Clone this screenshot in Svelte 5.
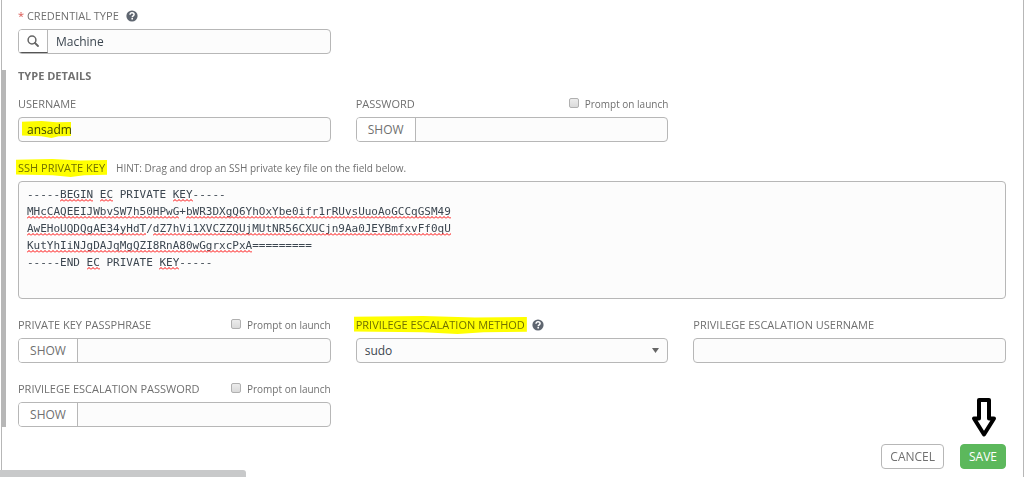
<script lang="ts">
	interface Mark {
		start: number;
		length: number;
	}

	let credentialType = $state('Machine');
	let username = $state('ansadm');
	let password = $state('');
	let passphrase = $state('');
	let method = $state('sudo');
	let escalationUser = $state('');
	let escalationPassword = $state('');

	let privateKey = $state(
		[
			'-----BEGIN EC PRIVATE KEY-----',
			'MHcCAQEEIJWbvSW7h50HPwG+bWR3DXgQ6YhOxYbe0ifr1rRUvsUuoAoGCCqGSM49',
			'AwEHoUQDQgAE34yHdT/dZ7hVi1XVCZZQUjMUtNR56CXUCjn9Aa0JEYBmfxvFf0qU',
			'KutYhIiNJgDAJqMgQZI8RnA80wGgrxcPxA=========',
			'-----END EC PRIVATE KEY-----'
		].join('\n')
	);

	const known = ['PRIVATE', 'END'];

	function findMarks(line: string): Mark[] {
		return [...line.matchAll(/[A-Za-z0-9]+/g)]
			.filter((m) => !known.includes(m[0]))
			.map((m) => ({ start: m.index, length: m[0].length }));
	}

	let markedLines = $derived(privateKey.split('\n').map(findMarks));
</script>

{#snippet help()}
	<svg class="help" viewBox="0 0 12 12" aria-hidden="true">
		<circle cx="6" cy="6" r="5.6" fill="#5f6670" />
		<path d="M4 4.8C4 3.4 4.9 2.8 6 2.8s2.1.7 2.1 1.8C8.1 5.9 6.2 5.9 6.2 7.2" fill="none" stroke="#fff" stroke-width="1.5" />
		<rect x="5.4" y="8" width="1.6" height="1.5" fill="#fff" />
	</svg>
{/snippet}

{#snippet prompt(id: string)}
	<label class="prompt" for={id}>
		<input {id} type="checkbox" />
		Prompt on launch
	</label>
{/snippet}

<form class="panel" onsubmit={(e) => e.preventDefault()}>
	<div class="grid">
		<div class="field">
			<div class="label-row">
				<label for="credential-type"><span class="required">*</span> CREDENTIAL TYPE</label>
				{@render help()}
			</div>
			<div class="group">
				<button type="button" class="lookup" aria-label="Search">
					<svg viewBox="0 0 12 12" aria-hidden="true">
						<circle cx="5" cy="5" r="3.9" fill="none" stroke="#666" stroke-width="1.5" />
						<path d="M8 8L11 11" stroke="#666" stroke-width="1.8" stroke-linecap="round" />
					</svg>
				</button>
				<input id="credential-type" type="text" bind:value={credentialType} />
			</div>
		</div>
	</div>

	<section class="details">
		<h2>TYPE DETAILS</h2>

		<div class="grid">
			<div class="field">
				<div class="label-row"><label for="username">USERNAME</label></div>
				<div class="group marked-value">
					<input id="username" type="text" bind:value={username} />
				</div>
			</div>
			<div class="field">
				<div class="label-row">
					<label for="password">PASSWORD</label>
					{@render prompt('prompt-password')}
				</div>
				<div class="group">
					<button type="button" class="show">SHOW</button>
					<input id="password" type="password" bind:value={password} />
				</div>
			</div>
		</div>

		<div class="field">
			<div class="label-row">
				<label class="marker" for="private-key">SSH PRIVATE KEY</label>
				<span class="hint">HINT: Drag and drop an SSH private key file on the field below.</span>
			</div>
			<div class="key">
				<textarea id="private-key" spellcheck="false" bind:value={privateKey}></textarea>
				<div class="squiggles" aria-hidden="true">
					{#each markedLines as marks}
						<div class="line">
							{#each marks as mark}
								<i style="left: {mark.start}ch; width: {mark.length}ch"></i>
							{/each}
						</div>
					{/each}
				</div>
			</div>
		</div>

		<div class="grid">
			<div class="field">
				<div class="label-row">
					<label for="passphrase">PRIVATE KEY PASSPHRASE</label>
					{@render prompt('prompt-passphrase')}
				</div>
				<div class="group">
					<button type="button" class="show">SHOW</button>
					<input id="passphrase" type="password" bind:value={passphrase} />
				</div>
			</div>
			<div class="field">
				<div class="label-row">
					<label class="marker" for="method">PRIVILEGE ESCALATION METHOD</label>
					{@render help()}
				</div>
				<div class="group">
					<select id="method" bind:value={method}>
						<option value="sudo">sudo</option>
						<option value="su">su</option>
					</select>
				</div>
			</div>
			<div class="field">
				<div class="label-row"><label for="escalation-user">PRIVILEGE ESCALATION USERNAME</label></div>
				<div class="group">
					<input id="escalation-user" type="text" bind:value={escalationUser} />
				</div>
			</div>
			<div class="field">
				<div class="label-row">
					<label for="escalation-password">PRIVILEGE ESCALATION PASSWORD</label>
					{@render prompt('prompt-escalation')}
				</div>
				<div class="group">
					<button type="button" class="show">SHOW</button>
					<input id="escalation-password" type="password" bind:value={escalationPassword} />
				</div>
			</div>
		</div>
	</section>

	<div class="actions">
		<button type="button" class="cancel">CANCEL</button>
		<div class="save-wrap">
			<svg class="arrow" viewBox="0 0 26 41" aria-hidden="true">
				<path d="M8 3h10v18.5h5L13 37.5 3 21.5h5z" fill="#fff" stroke="#000" stroke-width="4" stroke-linejoin="round" />
			</svg>
			<button type="submit" class="save">SAVE</button>
		</div>
	</div>
</form>
<div class="scrollbar"></div>

<style>
	:global(body) {
		margin: 0;
		background: #fff;
	}

	.panel,
	.panel button,
	.panel input,
	.panel select {
		box-sizing: border-box;
		font-family: 'Open Sans', sans-serif;
		font-size: 12px;
		color: #707070;
	}

	.panel {
		margin-left: 1px;
		padding: 8px 17px 0 16px;
		border: solid #b7b7b7;
		border-width: 0 1px;
	}

	.grid {
		display: grid;
		grid-template-columns: repeat(3, 1fr);
		gap: 18px 25px;
	}

	.details {
		display: flex;
		flex-direction: column;
		gap: 18px;
		margin: 16px 0 0 -16px;
		padding-left: 12px;
		border-left: 4px solid #b7b7b7;
	}

	h2 {
		margin: 0 0 -3px;
		font-size: 11px;
		line-height: 11px;
		font-weight: 700;
	}

	.field {
		display: flex;
		flex-direction: column;
		gap: 5px;
		min-width: 0;
	}

	.label-row {
		display: flex;
		align-items: center;
		height: 16px;
		font-size: 11px;
		line-height: 16px;
		white-space: nowrap;
	}

	.required {
		color: #d9534f;
	}

	.help {
		width: 12px;
		height: 12px;
		margin-left: 7px;
	}

	.prompt {
		display: flex;
		align-items: center;
		gap: 6px;
		margin-left: auto;
		font-size: 10px;
	}

	.panel .prompt input {
		appearance: none;
		width: 10px;
		height: 10px;
		margin: 0 0 2px;
		border: 1px solid #b0b0b0;
		border-radius: 2px;
		background: linear-gradient(#ececec, #dadada);
	}

	.hint {
		margin-left: 11px;
		font-size: 10px;
	}

	.group {
		position: relative;
		display: flex;
		box-sizing: border-box;
		height: 25px;
		border: 1px solid #b7b7b7;
		border-radius: 4px;
		background: #fcfcfc;
		overflow: hidden;
	}

	.group input,
	.group select {
		flex: 1;
		min-width: 0;
		padding: 0 8px;
		border: 0;
		outline: 0;
		background: transparent;
		color: #3c4650;
	}

	.group select {
		appearance: none;
		background: url("data:image/svg+xml,%3Csvg xmlns='http://www.w3.org/2000/svg' viewBox='0 0 7 5'%3E%3Cpath d='M0 0h7L3.5 5z' fill='%23666'/%3E%3C/svg%3E") no-repeat right 8px center / 7px 5px;
	}

	.group button {
		padding: 0;
		border: 0;
		border-right: 1px solid #b7b7b7;
		background: #fff;
	}

	.group .show {
		width: 59px;
	}

	.group .lookup {
		display: flex;
		align-items: center;
		justify-content: center;
		width: 29px;
		border-bottom: 1px solid #555;
	}

	.lookup svg {
		width: 12px;
		height: 12px;
	}

	.marker {
		position: relative;
	}

	.marker::after,
	.marked-value::after {
		content: '';
		position: absolute;
		inset: -1px -2px;
		background: #ff0;
		clip-path: polygon(0 4%, 40% 0, 70% 8%, 100% 6%, 100% 88%, 75% 90%, 60% 100%, 40% 90%, 0 86%);
		mix-blend-mode: multiply;
		pointer-events: none;
	}

	.marked-value::after {
		inset: 3px auto 3px 3px;
		width: 49px;
	}

	.key {
		position: relative;
		display: flex;
	}

	textarea,
	.squiggles {
		box-sizing: border-box;
		padding: 4px 8px;
		border: 1px solid #b7b7b7;
		font-family: 'DejaVu Sans Mono', monospace;
		font-size: 11px;
		line-height: 17px;
	}

	textarea {
		flex: 1;
		height: 118px;
		margin: 0;
		border-radius: 4px;
		outline: 0;
		resize: none;
		background: #fcfcfc;
		color: #3c4650;
	}

	.squiggles {
		position: absolute;
		inset: 0;
		border-color: transparent;
		pointer-events: none;
	}

	.line {
		position: relative;
		height: 17px;
	}

	.line i {
		position: absolute;
		bottom: 1px;
		height: 3px;
		background: url("data:image/svg+xml,%3Csvg xmlns='http://www.w3.org/2000/svg' width='4' height='3'%3E%3Cpath d='M0 2.5L2 .5L4 2.5' fill='none' stroke='red'/%3E%3C/svg%3E") repeat-x;
	}

	.actions {
		display: flex;
		justify-content: flex-end;
		gap: 16px;
		margin-top: 17px;
		padding-bottom: 8px;
	}

	.actions button {
		height: 25px;
		padding: 0 8px;
		border: 1px solid #b7b7b7;
		border-radius: 4px;
		background: #fff;
	}

	.actions .save {
		border-color: #5cb85c;
		background: #5cb85c;
		color: #fff;
	}

	.save-wrap {
		position: relative;
	}

	.arrow {
		position: absolute;
		bottom: 31px;
		left: 11px;
		width: 26px;
		height: 41px;
	}

	.scrollbar {
		position: relative;
		width: 24%;
		height: 7px;
		margin-top: -7px;
		border-top-right-radius: 3px;
		background: #c8c9ca;
	}
</style>
